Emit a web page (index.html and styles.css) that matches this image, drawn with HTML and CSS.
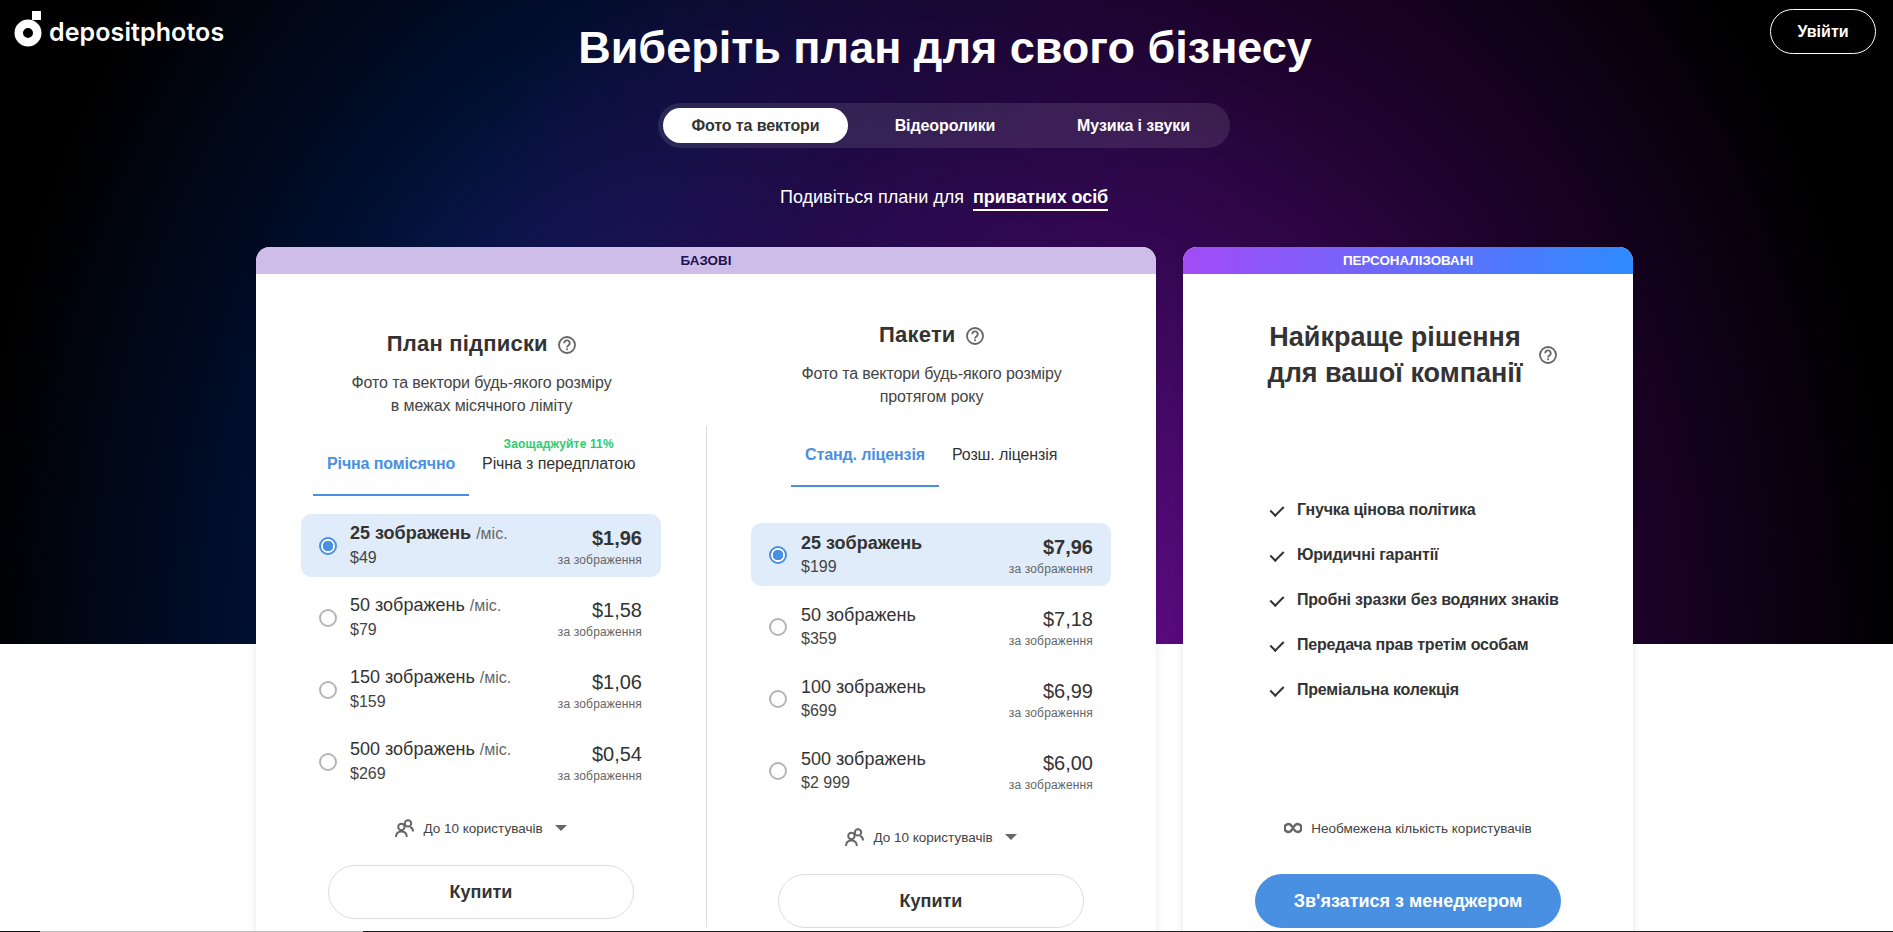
FILE: index.html
```html
<!DOCTYPE html>
<html lang="uk">
<head>
    <meta charset="UTF-8">
    <meta name="viewport" content="width=device-width, initial-scale=1.0">
    <title>Depositphotos - Виберіть план</title>
    <link rel="stylesheet" href="styles.css">
</head>
<body>
    <header class="top">
        <a class="logo">
            <svg class="logo-mark" width="28" height="36" viewBox="0 0 28 36">
                <path fill="#fff" fill-rule="evenodd" d="M14 8.500a13.500 13.500 0 1 1 0 27 13.500 13.500 0 0 1 0-27zm0 8.500a5 5 0 1 0 0 10 5 5 0 0 0 0-10z"/>
                <rect x="18" y="0" width="9" height="9" fill="#fff"/>
            </svg>
            <span class="logo-text">depositphotos</span>
        </a>
        <h1>Виберіть план для свого бізнесу</h1>
        <button class="login">Увійти</button>
    </header>

    <nav class="media-tabs">
        <button class="media-tab active">Фото та вектори</button>
        <button class="media-tab">Відеоролики</button>
        <button class="media-tab">Музика і звуки</button>
    </nav>

    <p class="audience">Подивіться плани для <span class="audience-link">приватних осіб</span></p>

    <main class="plans">
        <section class="card card-basic">
            <div class="card-label">Базові</div>
            <div class="columns">
                <div class="column column-sub">
                    <div class="column-head">
                        <h2>План підписки
                            <svg class="help" width="18" height="18" viewBox="0 0 18 18"><circle cx="9" cy="9" r="8" fill="none" stroke="#666" stroke-width="1.8"/><path d="M6.300 7.200a2.700 2.700 0 1 1 4.100 2.200c-.9.6-1.400 1-1.400 2" fill="none" stroke="#666" stroke-width="1.800"/><rect x="8.100" y="12.400" width="1.800" height="1.800" fill="#666"/></svg>
                        </h2>
                        <p>Фото та вектори будь-якого розміру<br>в межах місячного ліміту</p>
                    </div>
                    <div class="column-body">
                        <div class="license-tabs">
                            <div class="license-tab active">Річна помісячно</div>
                            <div class="license-tab with-note"><span class="note">Заощаджуйте 11%</span>Річна з передплатою</div>
                        </div>
                        <div class="rows">
                            <div class="row selected">
                                <span class="radio"></span>
                                <div class="row-name"><div class="row-title">25 зображень <small>/міс.</small></div><div class="row-total">$49</div></div>
                                <div class="row-price"><div class="price">$1,96</div><div class="per">за зображення</div></div>
                            </div>
                            <div class="row">
                                <span class="radio"></span>
                                <div class="row-name"><div class="row-title">50 зображень <small>/міс.</small></div><div class="row-total">$79</div></div>
                                <div class="row-price"><div class="price">$1,58</div><div class="per">за зображення</div></div>
                            </div>
                            <div class="row">
                                <span class="radio"></span>
                                <div class="row-name"><div class="row-title">150 зображень <small>/міс.</small></div><div class="row-total">$159</div></div>
                                <div class="row-price"><div class="price">$1,06</div><div class="per">за зображення</div></div>
                            </div>
                            <div class="row">
                                <span class="radio"></span>
                                <div class="row-name"><div class="row-title">500 зображень <small>/міс.</small></div><div class="row-total">$269</div></div>
                                <div class="row-price"><div class="price">$0,54</div><div class="per">за зображення</div></div>
                            </div>
                        </div>
                        <div class="users">
                            <svg class="users-icon" width="19" height="18" viewBox="0 0 19 18"><g fill="none" stroke="#666" stroke-width="2"><circle cx="13" cy="4.400" r="3.200"/><path d="M18 12.500c0-2.400-1-3.800-2.800-4.500"/><circle cx="6.400" cy="8" r="3.200"/><path d="M1 18c0-3.500 2-5.500 5.400-5.500s5.400 2 5.400 5.500"/></g></svg>
                            <span>До 10 користувачів</span>
                            <span class="caret"></span>
                        </div>
                        <button class="buy">Купити</button>
                    </div>
                </div>
                <div class="column column-pack">
                    <div class="column-head">
                        <h2>Пакети
                            <svg class="help" width="18" height="18" viewBox="0 0 18 18"><circle cx="9" cy="9" r="8" fill="none" stroke="#666" stroke-width="1.8"/><path d="M6.300 7.200a2.700 2.700 0 1 1 4.100 2.200c-.9.6-1.400 1-1.400 2" fill="none" stroke="#666" stroke-width="1.800"/><rect x="8.100" y="12.400" width="1.800" height="1.800" fill="#666"/></svg>
                        </h2>
                        <p>Фото та вектори будь-якого розміру<br>протягом року</p>
                    </div>
                    <div class="column-body">
                        <div class="license-tabs">
                            <div class="license-tab active">Станд. ліцензія</div>
                            <div class="license-tab">Розш. ліцензія</div>
                        </div>
                        <div class="rows">
                            <div class="row selected">
                                <span class="radio"></span>
                                <div class="row-name"><div class="row-title">25 зображень</div><div class="row-total">$199</div></div>
                                <div class="row-price"><div class="price">$7,96</div><div class="per">за зображення</div></div>
                            </div>
                            <div class="row">
                                <span class="radio"></span>
                                <div class="row-name"><div class="row-title">50 зображень</div><div class="row-total">$359</div></div>
                                <div class="row-price"><div class="price">$7,18</div><div class="per">за зображення</div></div>
                            </div>
                            <div class="row">
                                <span class="radio"></span>
                                <div class="row-name"><div class="row-title">100 зображень</div><div class="row-total">$699</div></div>
                                <div class="row-price"><div class="price">$6,99</div><div class="per">за зображення</div></div>
                            </div>
                            <div class="row">
                                <span class="radio"></span>
                                <div class="row-name"><div class="row-title">500 зображень</div><div class="row-total">$2 999</div></div>
                                <div class="row-price"><div class="price">$6,00</div><div class="per">за зображення</div></div>
                            </div>
                        </div>
                        <div class="users">
                            <svg class="users-icon" width="19" height="18" viewBox="0 0 19 18"><g fill="none" stroke="#666" stroke-width="2"><circle cx="13" cy="4.400" r="3.200"/><path d="M18 12.500c0-2.400-1-3.800-2.800-4.500"/><circle cx="6.400" cy="8" r="3.200"/><path d="M1 18c0-3.500 2-5.500 5.400-5.500s5.400 2 5.400 5.500"/></g></svg>
                            <span>До 10 користувачів</span>
                            <span class="caret"></span>
                        </div>
                        <button class="buy">Купити</button>
                    </div>
                </div>
            </div>
        </section>

        <section class="card card-custom">
            <div class="card-label">Персоналізовані</div>
            <div class="custom-body">
                <div class="custom-head">
                    <h2>Найкраще рішення<br>для вашої компанії</h2>
                    <svg class="help" width="18" height="18" viewBox="0 0 18 18"><circle cx="9" cy="9" r="8" fill="none" stroke="#666" stroke-width="1.8"/><path d="M6.300 7.200a2.700 2.700 0 1 1 4.100 2.200c-.9.6-1.400 1-1.400 2" fill="none" stroke="#666" stroke-width="1.800"/><rect x="8.100" y="12.400" width="1.800" height="1.800" fill="#666"/></svg>
                </div>
                <ul class="features">
                    <li>Гнучка цінова політика</li>
                    <li>Юридичні гарантії</li>
                    <li>Пробні зразки без водяних знаків</li>
                    <li>Передача прав третім особам</li>
                    <li>Преміальна колекція</li>
                </ul>
                <div class="unlimited">
                    <svg width="18" height="12" viewBox="0 0 18 12"><path d="M8.200 4.800C7 2.800 6 2 4.600 2a4 4 0 0 0 0 8c1.800 0 3-1.400 4.400-4s2.600-4 4.400-4a4 4 0 0 1 0 8c-1.400 0-2.400-.8-3.600-2.800" fill="none" stroke="#666" stroke-width="2.600"/></svg>
                    <span>Необмежена кількість користувачів</span>
                </div>
                <button class="contact">Зв'язатися з менеджером</button>
            </div>
        </section>
    </main>

    <div class="page-line"><span class="line-start"></span><span class="line-mid"></span></div>
</body>
</html>
```

FILE: styles.css
```css
* {
    box-sizing: border-box;
}
html, body {
    height: 932px;
    overflow: hidden;
}
body {
    margin: 0;
    font-family: 'Liberation Sans', Arial, sans-serif;
    color: #333;
    background-color: #fff;
    background-image:
        radial-gradient(ellipse 760px 1000px at 1140px 100%, #5c0a80 0%, rgba(78, 8, 112, 0.85) 25%, rgba(48, 4, 72, 0.65) 60%, rgba(30, 0, 45, 0) 100%),
        radial-gradient(ellipse 720px 1000px at 690px 100%, #1d1668 0%, #0c1a58 40%, rgba(0, 16, 52, 0.85) 65%, rgba(0, 10, 30, 0) 100%),
        linear-gradient(#000, #000);
    background-size: 100% 644px;
    background-repeat: no-repeat;
}

/* header */
.top {
    display: grid;
    grid-template-columns: 1fr auto 1fr;
    align-items: start;
    height: 103px;
    padding: 0 17px 0 14px;
}
.logo {
    display: flex;
    align-items: flex-start;
    gap: 7px;
    padding-top: 11px;
    color: #fff;
}
.logo-text {
    font-family: Inter, sans-serif;
    font-weight: 600;
    font-size: 25px;
    line-height: 34px;
    letter-spacing: 0.1px;
    margin-top: 4px;
}
h1 {
    margin: 20px 0 0;
    font-size: 45px;
    line-height: 56px;
    font-weight: 700;
    color: #fff;
}
.login {
    justify-self: end;
    width: 106px;
    height: 45px;
    margin-top: 9px;
    background: none;
    border: 1px solid #fff;
    border-radius: 23px;
    color: #fff;
    font: bold 16px 'Liberation Sans', Arial, sans-serif;
}

/* photo / video / music switch */
.media-tabs {
    display: grid;
    grid-template-columns: 185px 194px 183px;
    width: 572px;
    height: 45px;
    margin-left: 658px;
    padding: 5px;
    border-radius: 23px;
    background-color: rgba(255, 255, 255, 0.1);
}
.media-tab {
    background: none;
    border: none;
    border-radius: 18px;
    color: #fff;
    font: bold 16px 'Liberation Sans', Arial, sans-serif;
    letter-spacing: -0.1px;
}
.media-tab.active {
    background-color: #fff;
    color: #333;
}
.audience {
    margin: 37px 0 0 780px;
    height: 62px;
    color: #fff;
    font-size: 18px;
    line-height: 24px;
}
.audience-link {
    display: inline-block;
    margin-left: 4px;
    font-weight: 700;
    letter-spacing: -0.1px;
    border-bottom: 2px solid #fff;
}

/* cards */
.plans {
    display: flex;
    gap: 27px;
    padding-left: 256px;
}
.card {
    height: 700px;
    border-radius: 14px 14px 0 0;
    background-color: #fff;
    box-shadow: 0 0 8px rgba(0, 0, 0, 0.1);
}
.card-basic {
    width: 900px;
}
.card-custom {
    width: 450px;
}
.card-label {
    height: 27px;
    border-radius: 14px 14px 0 0;
    font-size: 13.4px;
    font-weight: 700;
    line-height: 27px;
    text-align: center;
    text-transform: uppercase;
}
.card-basic .card-label {
    background-color: #cfbde9;
    color: #1e1250;
}
.card-custom .card-label {
    background: linear-gradient(90deg, #a24bf5 0%, #2e8bff 100%);
    color: #fff;
}
.columns {
    display: grid;
    grid-template-columns: 451px 449px;
}
.column-head {
    text-align: center;
}
.column-sub .column-head {
    padding: 56px 0 0 0;
}
.column-pack .column-head {
    padding-top: 47px;
}
h2 {
    margin: 0;
    font-size: 22px;
    line-height: 28px;
    font-weight: 700;
    letter-spacing: 0.2px;
    color: #333;
}
.help {
    vertical-align: -3px;
    margin-left: 4px;
}
.column-head p {
    margin: 13px 0 9px;
    font-size: 16px;
    line-height: 23px;
    letter-spacing: -0.1px;
    color: #444;
}
.column-sub .column-body {
    height: 501px;
    padding: 0 45px;
    border-right: 1px solid #ddd;
}
.column-pack .column-body {
    padding: 0 45px 0 44px;
}
.license-tabs {
    display: flex;
    height: 70px;
}
.column-sub .license-tabs {
    margin: 0 0 18px 12px;
}
.column-pack .license-tabs {
    margin: 0 0 36px 40px;
}
.license-tab {
    padding: 28px 13px 0;
    font-size: 16px;
    line-height: 20px;
    letter-spacing: -0.12px;
    white-space: nowrap;
}
.license-tab.active {
    padding: 28px 14px 0;
    color: #4a90e2;
    font-weight: 700;
    border-bottom: 2px solid #4a90e2;
}
.with-note {
    padding-top: 10px;
    text-align: center;
}
.note {
    display: block;
    height: 18px;
    color: #2ecc71;
    font-size: 12px;
    font-weight: 700;
    line-height: 16px;
    letter-spacing: 0.15px;
}
.rows {
    display: flex;
    flex-direction: column;
    gap: 9px;
}
.row {
    display: flex;
    align-items: center;
    height: 63px;
    padding: 0 19px 0 18px;
    border-radius: 10px;
}
.column-pack .row {
    padding-right: 18px;
}
.row.selected {
    background-color: #e0ecfa;
}
.radio {
    flex: none;
    width: 18px;
    height: 18px;
    margin-right: 13px;
    border: 2px solid #b5b5b5;
    border-radius: 50%;
    background-color: #fff;
}
.column-pack .radio {
    margin-right: 14px;
}
.selected .radio {
    border-color: #4a90e2;
    background: radial-gradient(circle, #4a90e2 0, #4a90e2 5px, #fff 5.5px);
}
.row-name {
    flex: 1;
}
.row-title {
    font-size: 18px;
    line-height: 24px;
}
.row-title small {
    font-size: 16px;
    font-weight: 400;
    color: #666;
}
.selected .row-title {
    font-weight: 700;
}
.selected .row-title small {
    font-weight: 400;
}
.row-total {
    font-size: 16px;
    line-height: 24px;
    color: #444;
}
.row-price {
    text-align: right;
}
.price {
    font-size: 20px;
    line-height: 28px;
}
.selected .price {
    font-weight: 700;
}
.per {
    font-size: 12px;
    line-height: 16px;
    letter-spacing: 0.15px;
    color: #666;
}
.users {
    display: flex;
    align-items: center;
    justify-content: center;
    gap: 9px;
    height: 20px;
    margin-top: 25px;
    font-size: 13.5px;
    color: #444;
}
.caret {
    width: 0;
    height: 0;
    margin-left: 3px;
    border-left: 6px solid transparent;
    border-right: 6px solid transparent;
    border-top: 6px solid #666;
}
.buy {
    display: block;
    width: 306px;
    height: 54px;
    margin: 27px auto 0;
    background: #fff;
    border: 1px solid #ddd;
    border-radius: 27px;
    color: #333;
    font: bold 18px 'Liberation Sans', Arial, sans-serif;
}

/* personalised card */
.custom-body {
    display: flex;
    flex-direction: column;
    align-items: center;
}
.custom-head {
    display: flex;
    align-items: center;
    gap: 17px;
    margin: 45px 0 0 9px;
}
.custom-head h2 {
    font-size: 27px;
    line-height: 36px;
    letter-spacing: 0;
    text-align: center;
}
.custom-head .help {
    margin: 0;
}
.features {
    align-self: flex-start;
    margin: 107px 0 0;
    padding: 0 0 0 114px;
    list-style: none;
}
.features li {
    position: relative;
    height: 45px;
    font-size: 16px;
    font-weight: 700;
    line-height: 24px;
    letter-spacing: -0.2px;
    color: #333;
}
.features li::before {
    content: "";
    position: absolute;
    left: -24px;
    top: 5px;
    width: 6px;
    height: 11px;
    border-right: 2px solid #333;
    border-bottom: 2px solid #333;
    transform: rotate(45deg);
}
.unlimited {
    display: flex;
    align-items: center;
    gap: 9px;
    height: 20px;
    margin-top: 95px;
    font-size: 13.5px;
    color: #444;
}
.contact {
    width: 306px;
    height: 54px;
    margin-top: 36px;
    background-color: #4a90e2;
    border: none;
    border-radius: 27px;
    color: #fff;
    font: bold 18px 'Liberation Sans', Arial, sans-serif;
}

/* thin line along the bottom of the window */
.page-line {
    position: fixed;
    left: 0;
    right: 0;
    bottom: 0;
    display: flex;
    height: 1px;
    background-color: #222;
}
.line-start {
    width: 40px;
    background-color: #111;
}
.line-mid {
    width: 323px;
    background-color: #bbb;
}
```
